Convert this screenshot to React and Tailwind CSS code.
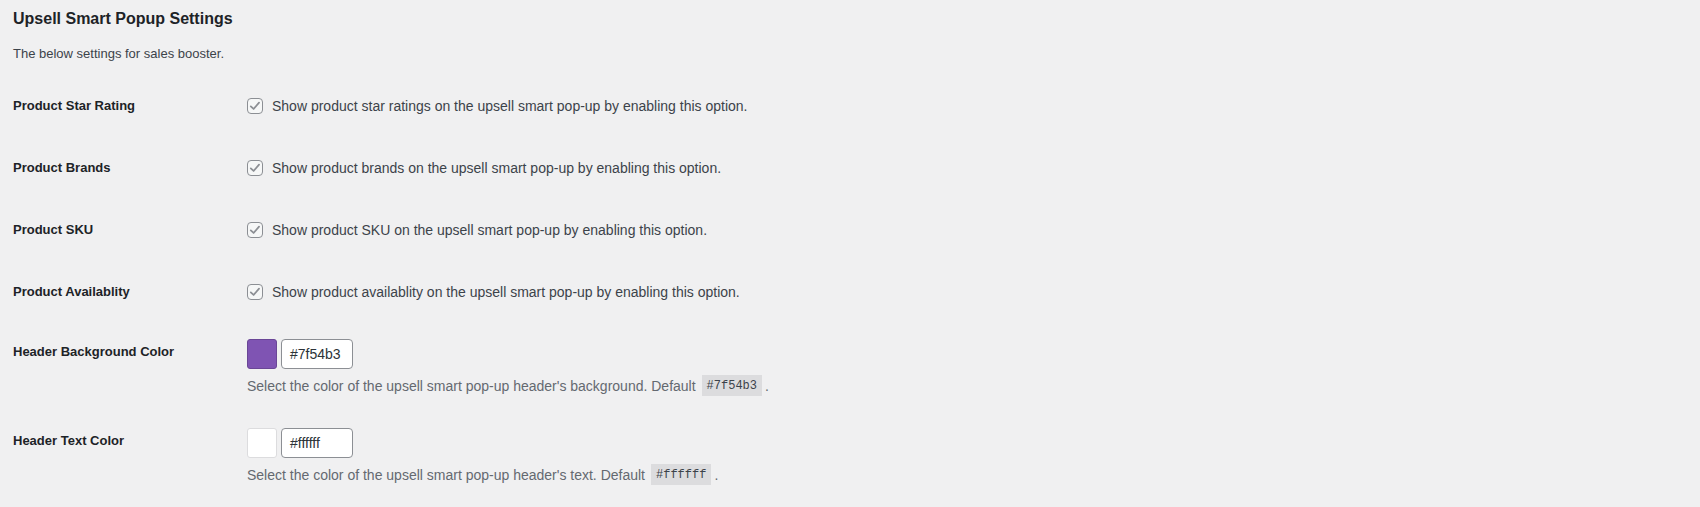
import React from 'react';

// Sales booster → Upsell Smart Popup settings screen (WP admin form-table look).

const checkboxRows = [
  { label: 'Product Star Rating', text: 'Show product star ratings on the upsell smart pop-up by enabling this option.' },
  { label: 'Product Brands', text: 'Show product brands on the upsell smart pop-up by enabling this option.' },
  { label: 'Product SKU', text: 'Show product SKU on the upsell smart pop-up by enabling this option.' },
  { label: 'Product Availablity', text: 'Show product availablity on the upsell smart pop-up by enabling this option.' },
];

const colorRows = [
  { label: 'Header Background Color', value: '#7f54b3', swatch: 'bg-[#7f54b3] border-[#6a4696]', desc: "Select the color of the upsell smart pop-up header's background. Default" },
  { label: 'Header Text Color', value: '#ffffff', swatch: 'bg-white border-[#dcdcde]', desc: "Select the color of the upsell smart pop-up header's text. Default" },
];

function Check() {
  return (
    <span className="w-4 h-4 shrink-0 rounded-[4px] border border-[#8c8f94] bg-[#f6f7f7] flex items-center justify-center">
      <svg viewBox="0 0 16 16" className="w-[14px] h-[14px]" aria-hidden="true">
        <path d="M3.2 8.4 L6.4 11.4 L12.6 4.2" fill="none" stroke="#8c8f94" strokeWidth="2" strokeLinecap="round" strokeLinejoin="round" />
      </svg>
    </span>
  );
}

export default function App() {
  return (
    <main className="min-h-screen w-full bg-[#f0f0f1] pl-[13px] text-[#3c434a]" style={{ fontFamily: '"Liberation Sans", Arial, sans-serif' }}>
      <h2 className="pt-[8px] text-[16px] leading-[22px] font-bold text-[#1d2327]">Upsell Smart Popup Settings</h2>
      <p className="mt-[14px] text-[13px] leading-[20px] text-[#3c434a]">The below settings for sales booster.</p>

      <div className="mt-[11px]">
        {checkboxRows.map((r) => (
          <div key={r.label} className="grid grid-cols-[234px_1fr] items-center py-[21px]">
            <div className="text-[13px] leading-[20px] font-bold text-[#1d2327]">{r.label}</div>
            <label className="flex items-center gap-[9px] text-[14px] leading-[20px] text-[#3c434a]">
              <Check />
              <span>{r.text}</span>
            </label>
          </div>
        ))}

        {colorRows.map((r) => (
          <div key={r.label} className="grid grid-cols-[234px_1fr] pt-[16px] pb-[16px]">
            <div className="pt-[3px] text-[13px] leading-[20px] font-bold text-[#1d2327]">{r.label}</div>
            <div>
              <div className="flex items-center gap-[4px]">
                <span className={`w-[30px] h-[30px] rounded-[3px] border ${r.swatch}`} />
                <span className="w-[72px] h-[30px] rounded-[4px] border border-[#8c8f94] bg-white pl-[8px] flex items-center text-[14px] text-[#2c3338]">{r.value}</span>
              </div>
              <p className="mt-[6px] text-[14px] leading-[20px] text-[#646970] flex items-center">
                <span>{r.desc}</span>
                <code className="ml-[6px] px-[5px] h-[21px] flex items-center bg-[#dcdcde] text-[12px] text-[#3c434a]" style={{ fontFamily: '"Liberation Mono", monospace' }}>{r.value}</code>
                <span className="ml-[3px]">.</span>
              </p>
            </div>
          </div>
        ))}
      </div>
    </main>
  );
}
